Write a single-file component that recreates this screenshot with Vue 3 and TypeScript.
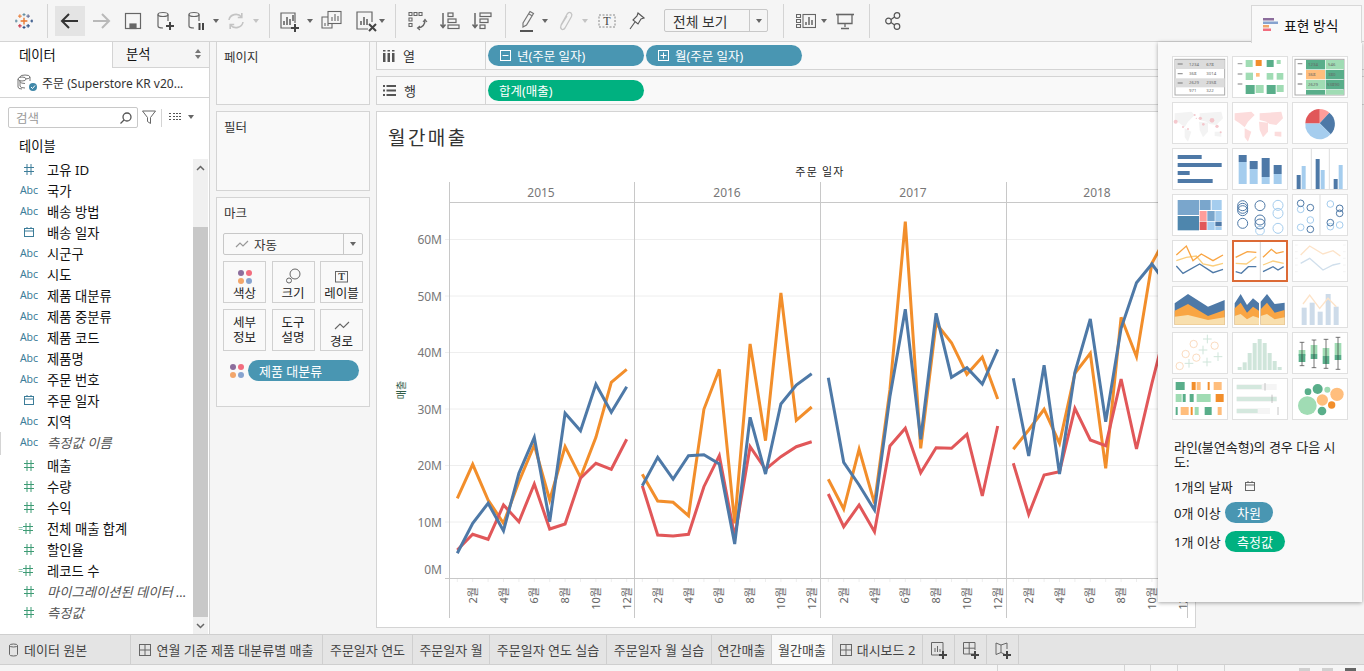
<script setup lang="ts">
type Kind = 'dim' | 'abc' | 'cal' | 'mea' | 'calc'
interface Field { name: string; kind: Kind; italic?: boolean; sep?: boolean }

const fields: Field[] = [
  { name: '고유 ID', kind: 'dim' },
  { name: '국가', kind: 'abc' },
  { name: '배송 방법', kind: 'abc' },
  { name: '배송 일자', kind: 'cal' },
  { name: '시군구', kind: 'abc' },
  { name: '시도', kind: 'abc' },
  { name: '제품 대분류', kind: 'abc' },
  { name: '제품 중분류', kind: 'abc' },
  { name: '제품 코드', kind: 'abc' },
  { name: '제품명', kind: 'abc' },
  { name: '주문 번호', kind: 'abc' },
  { name: '주문 일자', kind: 'cal' },
  { name: '지역', kind: 'abc' },
  { name: '측정값 이름', kind: 'abc', italic: true, sep: true },
  { name: '매출', kind: 'mea' },
  { name: '수량', kind: 'mea' },
  { name: '수익', kind: 'mea' },
  { name: '전체 매출 합계', kind: 'calc' },
  { name: '할인율', kind: 'mea' },
  { name: '레코드 수', kind: 'calc' },
  { name: '마이그레이션된 데이터 ...', kind: 'mea', italic: true },
  { name: '측정값', kind: 'mea', italic: true },
]

const sheetTabs = [
  { label: '데이터 원본', w: 131, icon: 'db', left: true },
  { label: '연월 기준 제품 대분류별 매출', w: 192, icon: 'grid' },
  { label: '주문일자 연도', w: 90 },
  { label: '주문일자 월', w: 77 },
  { label: '주문일자 연도 실습', w: 117 },
  { label: '주문일자 월 실습', w: 105 },
  { label: '연간매출', w: 60 },
  { label: '월간매출', w: 61, active: true },
  { label: '대시보드 2', w: 90, icon: 'grid' },
]

const grid = [239.5, 296, 352.5, 409, 465.5, 522]
const yLabels = [
  { t: '60M', y: 239.5 }, { t: '50M', y: 296 }, { t: '40M', y: 352.5 },
  { t: '30M', y: 409 }, { t: '20M', y: 465.5 }, { t: '10M', y: 522 }, { t: '0M', y: 569 },
]
const dividers = [449.5, 634.5, 820.5, 1006.5, 1187.5]
const years = [
  { t: '2015', x: 541 }, { t: '2016', x: 727 }, { t: '2017', x: 913 }, { t: '2018', x: 1097 },
]
const starts = [457.3, 642.3, 828.3, 1013.3]

const data: Record<string, number[][]> = {
  '#f28e2b': [
    [498.3, 464.3, 500, 523.3, 481.7, 445, 500, 446.7, 477.3, 437.3, 382.3, 369.3],
    [474.3, 501, 502.3, 515.7, 409.3, 369.3, 523.3, 344, 440.7, 293, 420.3, 407],
    [479.3, 509, 449.3, 503.3, 390, 221.7, 448.3, 323.3, 342.7, 374.3, 357, 399],
    [449.3, 430, 409.3, 443.3, 373.3, 353.3, 468.3, 317.3, 356.7, 263.3, 235, 220],
  ],
  '#e15759': [
    [550, 534.3, 539.3, 505, 521.7, 484, 529, 524, 478.3, 463.3, 469.3, 439.3],
    [485.7, 535, 536, 534.3, 486.7, 455.7, 536.7, 446.7, 469.3, 456.7, 446.7, 441.7],
    [494, 526.7, 505, 531.7, 446, 428.3, 472.7, 447.7, 448.3, 434.3, 496, 426],
    [463.3, 514.3, 475, 471.7, 408.3, 440, 445.7, 379, 449, 383.3, 323, 330],
  ],
  '#4e79a7': [
    [553.3, 523.3, 503.3, 530.7, 473.3, 437.3, 521.7, 413.3, 430.7, 384.3, 412.3, 386.7],
    [485.7, 457.3, 479, 455.7, 454.7, 464, 544, 417.3, 474, 404, 385, 373.7],
    [377.7, 462.3, 485, 510, 396.7, 309.3, 439.3, 313.3, 377.3, 367.7, 384, 349.3],
    [378.3, 456, 365.3, 474, 372.3, 319, 421.7, 328.3, 282.7, 264, 285, 270],
  ],
}
const series = Object.keys(data).flatMap((color) =>
  data[color].map((ys, p) => ({
    color,
    pts: ys.map((y, i) => `${(starts[p] + i * 15.4).toFixed(1)},${y}`).join(' '),
  })),
)
const months = starts.flatMap((s) =>
  [2, 4, 6, 8, 10, 12].map((m) => ({ t: `${m}월`, x: s + (m - 1) * 15.4 })),
)
const ticks = starts.flatMap((s) => Array.from({ length: 12 }, (_, i) => s + i * 15.4))
const continents =
  'M45 340L95 335L105 345L85 365L75 382L60 370L45 360ZM75 385L95 395L85 425L75 412ZM120 340L185 335L190 355L170 375L150 372L140 365L120 360ZM118 365L145 368L145 395L130 412L120 390ZM165 395L185 395L185 410L165 408Z'
</script>

<template>
  <div class="app">
    <header class="toolbar">
      <div class="tb w47">
        <svg width="18" height="18" viewBox="0 0 24 24" stroke-width="1.3">
          <g stroke="#e8762d"><path d="M12 7.5v9M7.5 12h9" stroke-width="1.8" /></g>
          <g stroke="#e8762d"><path d="M6.5 3v5M4 5.5h5" /></g>
          <g stroke="#59879b"><path d="M12 1.5v4M10 3.500h4" /><path d="M1.500 10v4M0 12h3.500" /></g>
          <g stroke="#5b6591"><path d="M17.500 3v5M15 5.500h5" /></g>
          <g stroke="#c72035"><path d="M6.500 16v5M4 18.500h5" /></g>
          <g stroke="#1f457e"><path d="M17.500 16v5M15 18.500h5" /><path d="M22.500 10v4M20.500 12h3.500" /><path d="M12 18.500v4M10 20.500h4" /></g>
        </svg>
      </div>
      <i class="sep"></i>
      <i class="sp7"></i>
      <button class="tb w30 on">
        <svg width="24" height="24" viewBox="0 0 24 24" fill="none" stroke="#333" stroke-width="2"><path d="M20 12H4M11 5l-7 7 7 7" /></svg>
      </button>
      <div class="tb w32">
        <svg width="24" height="24" viewBox="0 0 24 24" fill="none" stroke="#b9b9b9" stroke-width="2"><path d="M4 12h16M13 5l7 7-7 7" /></svg>
      </div>
      <div class="tb w32">
        <svg width="20" height="20" viewBox="0 0 20 20" fill="none" stroke="#666" stroke-width="1.200"><rect x="2.500" y="2.500" width="15" height="15" /><rect x="7" y="13" width="6" height="4.500" fill="#666" /></svg>
      </div>
      <div class="tb w32">
        <svg width="24" height="24" viewBox="0 0 24 24" fill="none" stroke="#666" stroke-width="1.200"><ellipse cx="10" cy="5.500" rx="5" ry="2" /><path d="M5 5.500V17q0 2 5 2M15 5.500V12" /><path d="M17 13v8M13 17h8" stroke="#444" stroke-width="2" /></svg>
      </div>
      <div class="tb w30">
        <svg width="24" height="24" viewBox="0 0 24 24" fill="none" stroke="#666" stroke-width="1.200"><ellipse cx="10" cy="5.500" rx="5" ry="2" /><path d="M5 5.500V17q0 2 5 2M15 5.500V12" /><path d="M15.500 14v7M19 14v7" stroke="#444" stroke-width="2" /></svg>
      </div>
      <div class="tb w10"><i class="dd"></i></div>
      <div class="tb w29">
        <svg width="20" height="20" viewBox="0 0 20 20" fill="none" stroke="#c4c4c4" stroke-width="1.600"><path d="M3 9a7 6.500 0 0 1 12.500-3M17 11a7 6.500 0 0 1-12.500 3" /><path d="M15.800 2v4.500h-4M4.200 18v-4.500h4" /></svg>
      </div>
      <div class="tb w12"><i class="dd off"></i></div>
      <i class="sp7"></i>
      <i class="sep"></i>
      <i class="sp4"></i>
      <div class="tb w30">
        <svg width="24" height="24" viewBox="0 0 24 24" fill="none" stroke="#666" stroke-width="1.200"><path d="M16 19H4V4h14v10" /><path d="M7 16v-4M10 16V8M13 16v-6M16 12V6" stroke-width="1.600" /><path d="M18 15v8M14 19h8" stroke="#444" stroke-width="2" /></svg>
      </div>
      <div class="tb w12"><i class="dd"></i></div>
      <div class="tb w30">
        <svg width="24" height="24" viewBox="0 0 24 24" fill="none" stroke="#666" stroke-width="1.100"><rect x="9" y="2.500" width="13" height="12" fill="#f5f5f5" /><path d="M13 12V8M16 12V5M19 12V7" /><path d="M9 8H3v11h10v-4.500" /><path d="M6 17v-3M9 17v-2" /></svg>
      </div>
      <i class="sp7"></i>
      <div class="tb w26">
        <svg width="24" height="24" viewBox="0 0 24 24" fill="none" stroke="#666" stroke-width="1.200"><path d="M14 20H3V3h15v10" /><path d="M7 16v-4M10 16V8M13 16v-6" stroke-width="1.600" /><path d="M15 15l7 7M22 15l-7 7" stroke="#444" stroke-width="2" /></svg>
      </div>
      <div class="tb w6"><i class="dd"></i></div>
      <i class="sp10"></i>
      <i class="sep"></i>
      <i class="sp6"></i>
      <div class="tb w30">
        <svg width="22" height="22" viewBox="0 0 22 22" fill="none" stroke="#666" stroke-width="1.100"><path d="M3 2.500h3v3H3zM8 2.500h3v3H8zM13 2.500h3v3h-3zM3 8h3v3H3zM3 13.500h3v3H3z" /><path d="M19 10q0 7-7 8" stroke-width="1.500" /><path d="M17 12l2-2.500 2 2.500M14 16l-2.500 2 2.500 2" /></svg>
      </div>
      <i class="sp3"></i>
      <div class="tb w30">
        <svg width="22" height="22" viewBox="0 0 22 22" fill="none" stroke="#666" stroke-width="1.200"><path d="M4 3v14M1.500 14.500L4 17.500l2.500-3" stroke-width="1.500" /><rect x="9" y="3" width="5" height="3.500" /><rect x="9" y="9" width="8" height="3.500" /><rect x="9" y="15" width="11" height="3.500" /></svg>
      </div>
      <i class="sp2"></i>
      <div class="tb w30">
        <svg width="22" height="22" viewBox="0 0 22 22" fill="none" stroke="#666" stroke-width="1.200"><path d="M4 3v14M1.500 14.500L4 17.500l2.500-3" stroke-width="1.500" /><rect x="9" y="3" width="11" height="3.500" /><rect x="9" y="9" width="8" height="3.500" /><rect x="9" y="15" width="5" height="3.500" /></svg>
      </div>
      <i class="sp8"></i>
      <i class="sep"></i>
      <i class="sp7"></i>
      <div class="tb w28">
        <svg width="20" height="24" viewBox="0 0 20 24" fill="none" stroke="#777" stroke-width="1.200"><path d="M6 14L13 2.500l3.500 2L9.500 16 6 18zM12 5l3.500 2" /><rect x="3" y="21" width="13" height="2" fill="#555" stroke="none" /></svg>
      </div>
      <div class="tb w8"><i class="dd"></i></div>
      <i class="sp2"></i>
      <div class="tb w30">
        <svg width="16" height="22" viewBox="0 0 16 22" fill="none" stroke="#c4c4c4" stroke-width="1.300"><path d="M3 15L9.500 3.500q2-2 3.500-.5t.5 3.500L7 18q-2 2.500-3.500 1T3 15.500L9 6" /></svg>
      </div>
      <div class="tb w8"><i class="dd off"></i></div>
      <div class="tb w36">
        <svg width="18" height="18" viewBox="0 0 18 18" fill="none"><rect x="1" y="3" width="16" height="12" stroke="#888" stroke-dasharray="2 1.500" /><text x="9" y="13" text-anchor="middle" class="tglyph">T</text></svg>
      </div>
      <div class="tb w24">
        <svg width="16" height="18" viewBox="0 0 16 18" fill="none" stroke="#555" stroke-width="1.100"><path d="M9 1l6 5-3 1-3 5-5-4 4-4zM6 10l-5 7" /></svg>
      </div>
      <i class="sp15"></i>
      <div class="view-select"><span>전체 보기</span><b><i class="dd"></i></b></div>
      <i class="sp15"></i>
      <i class="sep"></i>
      <i class="sp12"></i>
      <div class="tb w20">
        <svg width="20" height="16" viewBox="0 0 20 16" fill="none" stroke="#666" stroke-width="1.100"><path d="M.5 1.500h4v3h-4zM.5 6.500h4v3h-4zM.5 11.500h4v3h-4z" /><rect x="7" y="1.500" width="12.500" height="13" /><path d="M10 12V9M13 12V4M16 12V7" stroke-width="1.500" /></svg>
      </div>
      <div class="tb w15"><i class="dd"></i></div>
      <div class="tb w28">
        <svg width="18" height="18" viewBox="0 0 18 18" fill="none" stroke="#666" stroke-width="1.300"><path d="M0 2.500h18" stroke-width="1.600" /><path d="M2 2.500v9h14v-9M9 11.500V15M5 16.500h8" /></svg>
      </div>
      <i class="sp10"></i>
      <i class="sep"></i>
      <i class="sp8"></i>
      <div class="tb w30">
        <svg width="16" height="18" viewBox="0 0 16 18" fill="none" stroke="#555" stroke-width="1.200"><circle cx="3.500" cy="9" r="2.800" /><circle cx="12" cy="3.500" r="2.800" /><circle cx="12" cy="14.500" r="2.800" /><path d="M6 7.500l3.600-2.400M6 10.500l3.600 2.400" /></svg>
      </div>
    </header>

    <main class="main">
      <aside class="data-pane">
        <div class="pane-tabs">
          <div class="ptab current">데이터</div>
          <div class="ptab other"><span>분석</span><em class="updown"></em></div>
        </div>
        <div class="source">
          <svg width="22" height="20" viewBox="0 0 22 20" fill="none" stroke="#777" stroke-width="1"><ellipse cx="8" cy="4" rx="5" ry="2" /><path d="M3 4v9q0 2 5 2M13 4v4M3 8.500q0 2 5 2" /><ellipse cx="5" cy="6" rx="4" ry="2" fill="#fff" /><path d="M1 6v8q0 2 4 2" /><circle cx="16" cy="14" r="4" fill="#3f87a8" stroke="none" /><path d="M14 14l1.500 1.500 2.500-3" stroke="#fff" /></svg>
          <span>주문 (Superstore KR v20...</span>
        </div>
        <div class="search-row">
          <div class="search">
            <span>검색</span>
            <svg width="14" height="14" viewBox="0 0 14 14" fill="none" stroke="#555" stroke-width="1.300"><circle cx="8" cy="6" r="4" /><path d="M5 9l-3.500 3.500" /></svg>
          </div>
          <svg class="filter" width="14" height="14" viewBox="0 0 14 14" fill="none" stroke="#666"><path d="M.5 1h13L8.500 7.500v6l-3-2V7.500z" /></svg>
          <i class="vline"></i>
          <svg class="listico" width="13" height="10" viewBox="0 0 13 10" fill="none" stroke="#555"><path d="M0 1.500h3M4 1.500h9M0 4.500h3M4 4.500h9M0 7.500h3M4 7.500h9" stroke-dasharray="2 1" /></svg>
          <i class="dd listdd"></i>
        </div>
        <div class="tables">테이블</div>
        <div class="list-wrap">
          <ul class="fields">
            <li v-for="f in fields" :key="f.name" class="field" :class="{ sep: f.sep }">
              <span class="ficon" :class="f.kind">
                <template v-if="f.kind === 'abc'">Abc</template>
                <svg v-else-if="f.kind === 'cal'" width="12" height="12" viewBox="0 0 12 12" fill="none" stroke="currentColor"><rect x="1.500" y="2.500" width="9" height="8" /><path d="M1.500 5h9M4 1v2M8 1v2" /></svg>
                <template v-else>
                  <i v-if="f.kind === 'calc'" class="eq">=</i>
                  <svg width="10" height="11" viewBox="0 0 10 11" fill="none" stroke="currentColor"><path d="M3 0v11M7 0v11M0 3.500h10M0 7.500h10" /></svg>
                </template>
              </span>
              <span class="fname" :class="{ it: f.italic }">{{ f.name }}</span>
            </li>
          </ul>
          <div class="scrollbar">
            <div class="sb-top"><svg width="9" height="6" viewBox="0 0 9 6" fill="none" stroke="#666" stroke-width="1.500"><path d="M1 5l3.500-3.500L8 5" /></svg></div>
            <div class="sb-thumb"></div>
            <div class="sb-bot"><svg width="9" height="6" viewBox="0 0 9 6" fill="none" stroke="#666" stroke-width="1.500"><path d="M1 1l3.500 3.500L8 1" /></svg></div>
          </div>
        </div>
      </aside>

      <section class="cards">
        <div class="card c-pages">페이지</div>
        <div class="card c-filter">필터</div>
        <div class="card c-marks">
          <div class="marks-title">마크</div>
          <div class="mark-select">
            <svg width="14" height="10" viewBox="0 0 14 10" fill="none" stroke="#999" stroke-width="1.200"><path d="M1 8l4-4 3 3 5-5" /></svg>
            <span>자동</span>
            <b><i class="dd"></i></b>
          </div>
          <div class="mark-grid">
            <div class="mbtn">
              <span class="dots big"><i></i><i></i><i></i><i></i></span>
              <span>색상</span>
            </div>
            <div class="mbtn">
              <svg width="16" height="16" viewBox="0 0 16 16" fill="none" stroke="#666"><circle cx="10" cy="6" r="5" /><circle cx="4" cy="12.500" r="2.500" fill="#f9f9f9" /></svg>
              <span>크기</span>
            </div>
            <div class="mbtn">
              <svg width="14" height="14" viewBox="0 0 14 14" fill="none"><rect x=".5" y="1.500" width="12" height="10.500" stroke="#666" /><text x="6.500" y="10" text-anchor="middle" class="tglyph small">T</text></svg>
              <span>레이블</span>
            </div>
            <div class="mbtn text2">세부<br />정보</div>
            <div class="mbtn text2">도구<br />설명</div>
            <div class="mbtn">
              <svg width="16" height="12" viewBox="0 0 16 12" fill="none" stroke="#666" stroke-width="1.100"><path d="M1 9l5-5 3.500 3.500L15 2" /></svg>
              <span>경로</span>
            </div>
          </div>
          <div class="mark-pill">
            <span class="dots"><i></i><i></i><i></i><i></i></span>
            <span class="pill blue wide">제품 대분류</span>
          </div>
        </div>
      </section>

      <section class="workspace">
        <div class="shelf first">
          <div class="shelf-label">
            <svg width="12" height="12" viewBox="0 0 12 12" fill="#555"><path d="M0 3h2.500v9H0zM4.500 3H7v9H4.500zM9 3h2.500v9H9zM0 0h2.500v1.500H0zM4.500 0H7v1.500H4.500zM9 0h2.500v1.500H9z" /></svg>
            <span>열</span>
          </div>
          <span class="pill blue shelfpill"><svg width="11" height="11" viewBox="0 0 11 11" fill="none" stroke="#fff"><rect x=".5" y=".5" width="10" height="10" /><path d="M2.500 5.500h6" /></svg>년(주문 일자)</span>
          <span class="pill blue shelfpill gap"><svg width="11" height="11" viewBox="0 0 11 11" fill="none" stroke="#fff"><rect x=".5" y=".5" width="10" height="10" /><path d="M2.500 5.500h6M5.500 2.500v6" /></svg>월(주문 일자)</span>
        </div>
        <div class="shelf second">
          <div class="shelf-label">
            <svg width="13" height="11" viewBox="0 0 13 11" fill="#555"><path d="M0 0h2v2H0zM3.500 0H13v2H3.500zM0 4.500h2v2H0zM3.500 4.500H13v2H3.500zM0 9h2v2H0zM3.500 9H13v2H3.500z" /></svg>
            <span>행</span>
          </div>
          <span class="pill green shelfpill text-only">합계(매출)</span>
        </div>
        <div class="view">
          <h1 class="title">월간매출</h1>
          <svg class="chart" viewBox="377 161 818 466" width="818" height="466">
            <text x="820" y="176" text-anchor="middle" class="hdr">주문 일자</text>
            <line v-for="y in grid" :key="y" x1="445" x2="1187" :y1="y" :y2="y" stroke="#eeeeee" />
            <line v-for="x in ticks" :key="x" :x1="x" :x2="x" y1="578" y2="582" stroke="#eeeeee" />
            <line v-for="x in dividers" :key="x" :x1="x" :x2="x" y1="182" y2="618" stroke="#c8c8c8" />
            <line x1="449" x2="1187" y1="202.500" y2="202.500" stroke="#c8c8c8" />
            <line x1="445" x2="1187" y1="578.500" y2="578.500" stroke="#c8c8c8" />
            <text v-for="y in years" :key="y.t" :x="y.x" y="197" text-anchor="middle" class="axis">{{ y.t }}</text>
            <text v-for="l in yLabels" :key="l.t" x="442" :y="l.y + 4.500" text-anchor="end" class="axis">{{ l.t }}</text>
            <text transform="translate(405,390) rotate(-90)" text-anchor="middle" class="ytitle">매출</text>
            <polyline v-for="(s, i) in series" :key="i" :points="s.pts" fill="none" :stroke="s.color" stroke-width="3" stroke-linejoin="miter" />
            <text v-for="m in months" :key="m.x" :transform="`translate(${m.x + 4},587) rotate(-90)`" text-anchor="end" class="mlabel">{{ m.t }}</text>
          </svg>
        </div>
      </section>
    </main>

    <nav class="sheet-tabs">
      <div v-for="t in sheetTabs" :key="t.label" class="stab" :class="{ active: t.active, left: t.left }" :style="{ width: t.w + 'px' }">
        <svg v-if="t.icon === 'db'" width="9" height="14" viewBox="0 0 9 14" fill="none" stroke="#666"><ellipse cx="4.500" cy="2.500" rx="4" ry="1.500" /><path d="M.5 2.500v9q0 1.500 4 1.500t4-1.500v-9" /></svg>
        <svg v-if="t.icon === 'grid'" width="12" height="12" viewBox="0 0 12 12" fill="none" stroke="#666"><rect x=".5" y=".5" width="11" height="11" /><path d="M6 .5v11M.5 6h11" /></svg>
        <span>{{ t.label }}</span>
      </div>
      <div class="stab newtab">
        <svg width="20" height="20" viewBox="0 0 20 20" fill="none" stroke="#666"><path d="M13 15H2.500V2.500H14V11" /><path d="M6 12V8M8.500 12V6M11 12V9" /><path d="M14 11v8M10 15h8" stroke="#444" stroke-width="2" /></svg>
      </div>
      <div class="stab newtab">
        <svg width="20" height="20" viewBox="0 0 20 20" fill="none" stroke="#666"><path d="M13 14H2.500V2.500H14V10M8.200 2.500V14M2.500 8.200H14" /><path d="M14 11v8M10 15h8" stroke="#444" stroke-width="2" /></svg>
      </div>
      <div class="stab newtab">
        <svg width="20" height="20" viewBox="0 0 20 20" fill="none" stroke="#666"><path d="M12 14.500l-4-2-5 2V3l5 2 6-2v6M8 5v7.500" /><path d="M14 11v8M10 15h8" stroke="#444" stroke-width="2" /></svg>
      </div>
    </nav>
    <footer class="status">
      <i class="st a"></i><i class="st b"></i><i class="st c"></i><i class="st d"></i><i class="st e"></i>
      <em></em><em></em><em class="dk"></em>
    </footer>

    <div class="showme-tab">
      <svg width="15" height="13" viewBox="0 0 15 13"><rect width="11" height="2.500" fill="#8c6d9c" /><rect y="3.500" width="15" height="2.500" fill="#87a3cf" /><rect y="7" width="6" height="2.500" fill="#f2a66b" /><rect y="10.500" width="8" height="2.500" fill="#f26d7e" /></svg>
      <span>표현 방식</span>
    </div>
    <aside class="showme">
      <div class="tiles">
        <div class="tile"><svg viewBox="40 171 162 120">
          <rect x="46" y="178" width="149" height="107" fill="#fff" stroke="#aaa" stroke-width="3" /><rect x="46" y="180" width="149" height="27" fill="#dcdcdc" /><rect x="46" y="235" width="149" height="27" fill="#dcdcdc" />
          <path d="M54 192h15M54 221h15M54 249h15" stroke="#999" stroke-width="4" />
          <text class="tiny" x="88" y="198">1234</text><text class="tiny" x="140" y="198">678</text><text class="tiny" x="88" y="225">368</text><text class="tiny" x="140" y="225">3014</text><text class="tiny" x="88" y="253">2629</text><text class="tiny" x="140" y="253">2358</text><text class="tiny" x="88" y="276">971</text><text class="tiny" x="140" y="276">322</text>
        </svg></div>
        <div class="tile"><svg viewBox="220 171 162 120">
          <path d="M234 191h14M234 222h14M234 252h14" stroke="#aaa" stroke-width="4" />
          <rect x="258" y="180" width="21" height="21" fill="#a0dcb4" /><rect x="288" y="180" width="18" height="18" fill="#f28e2b" /><rect x="321" y="180" width="21" height="21" fill="#59ae8a" /><rect x="351" y="180" width="12" height="12" fill="#a0dcb4" />
          <rect x="258" y="218" width="22" height="22" fill="#a0dcb4" /><rect x="289" y="219" width="11" height="11" fill="#ffbe7d" /><rect x="321" y="219" width="20" height="20" fill="#a0dcb4" /><rect x="351" y="219" width="20" height="20" fill="#a0dcb4" />
          <rect x="258" y="255" width="27" height="27" fill="#59ae8a" /><rect x="288" y="255" width="24" height="24" fill="#a0dcb4" /><rect x="321" y="255" width="27" height="27" fill="#59ae8a" /><rect x="351" y="255" width="21" height="21" fill="#a0dcb4" />
        </svg></div>
        <div class="tile"><svg viewBox="400 171 162 120">
          <rect x="406" y="178" width="147" height="107" fill="#fff" stroke="#aaa" stroke-width="3" /><path d="M414 191h14M414 222h14M414 252h14" stroke="#999" stroke-width="4" />
          <rect x="439" y="180" width="57" height="28" fill="#59ae8a" /><rect x="498" y="180" width="55" height="28" fill="#a0dcb4" /><rect x="439" y="210" width="57" height="28" fill="#ffbe7d" /><rect x="498" y="210" width="55" height="28" fill="#59ae8a" /><rect x="439" y="240" width="57" height="28" fill="#a0dcb4" /><rect x="498" y="240" width="55" height="28" fill="#59ae8a" /><rect x="439" y="270" width="57" height="14" fill="#59ae8a" /><rect x="498" y="270" width="55" height="14" fill="#a0dcb4" />
          <text class="tiny" x="445" y="198">1234</text><text class="tiny" x="505" y="198">546</text><text class="tiny" x="445" y="228">368</text><text class="tiny" x="505" y="228">380</text><text class="tiny" x="445" y="258">2629</text><text class="tiny" x="502" y="258">53890</text>
        </svg></div>

        <div class="tile"><svg viewBox="40 309 162 120">
          <path :d="continents" fill="#f3f3f3" />
          <g fill="#f3bcc2" opacity=".8"><circle cx="48" cy="365" r="6" /><circle cx="122" cy="355" r="5" /><circle cx="157" cy="361" r="7" /><circle cx="105" cy="345" r="3" /><circle cx="172" cy="379" r="5" /><circle cx="131" cy="373" r="4" /><circle cx="70" cy="381" r="3" /><circle cx="85" cy="387" r="3" /><circle cx="183" cy="397" r="3" /><circle cx="110" cy="355" r="2" /></g>
        </svg></div>
        <div class="tile"><svg viewBox="220 309 162 120"><path :d="continents" transform="translate(180,0)" fill="#fcdcdc" /></svg></div>
        <div class="tile"><svg viewBox="400 309 162 120">
          <path d="M480 370L480 327A43.500 43.500 0 0 1 509 338Z" fill="#ff9d9a" /><path d="M480 370L509 338A43.500 43.500 0 0 1 513 403Z" fill="#4e79a7" /><path d="M480 370L513 403A43.500 43.500 0 0 1 437 370Z" fill="#a5cdee" /><path d="M480 370L437 370A43.500 43.500 0 0 1 480 327Z" fill="#e15759" />
        </svg></div>

        <div class="tile"><svg viewBox="40 447 162 120"><g fill="#4e79a7"><rect x="54" y="465" width="72" height="12" /><rect x="54" y="489" width="132" height="12" /><rect x="54" y="513" width="36" height="12" /><rect x="54" y="537" width="105" height="12" /></g></svg></div>
        <div class="tile"><svg viewBox="220 447 162 120">
          <g fill="#4e79a7"><rect x="237" y="465" width="24" height="21" /><rect x="270" y="483" width="24" height="24" /><rect x="306" y="474" width="24" height="57" /><rect x="342" y="495" width="24" height="27" /></g>
          <g fill="#a5cdee"><rect x="237" y="486" width="24" height="66" /><rect x="270" y="507" width="24" height="45" /><rect x="306" y="531" width="24" height="21" /><rect x="342" y="522" width="24" height="30" /></g>
        </svg></div>
        <div class="tile"><svg viewBox="400 447 162 120">
          <path d="M455 447v120M509 447v120" stroke="#ccc" stroke-width="2" />
          <g fill="#4e79a7"><rect x="411" y="525" width="12" height="42" /><rect x="468" y="477" width="12" height="90" /><rect x="522" y="537" width="12" height="30" /></g>
          <g fill="#a5cdee"><rect x="426" y="498" width="12" height="69" /><rect x="483" y="510" width="12" height="57" /><rect x="537" y="495" width="12" height="72" /></g>
        </svg></div>

        <div class="tile"><svg viewBox="40 585 162 120">
          <rect x="54" y="600" width="64" height="45" fill="#7aa6cc" /><rect x="54" y="648" width="64" height="43" fill="#4e86ad" /><rect x="120" y="600" width="33" height="30" fill="#7aa6cc" /><rect x="156" y="600" width="30" height="30" fill="#a5cdee" /><rect x="120" y="633" width="21" height="30" fill="#ff9d9a" /><rect x="143" y="633" width="22" height="30" fill="#7aa6cc" /><rect x="167" y="633" width="19" height="30" fill="#a5cdee" /><rect x="120" y="665" width="21" height="25" fill="#e15759" /><rect x="143" y="665" width="22" height="25" fill="#a5cdee" /><rect x="167" y="665" width="19" height="14" fill="#4e79a7" /><rect x="167" y="681" width="19" height="9" fill="#a5cdee" />
        </svg></div>
        <div class="tile"><svg viewBox="220 585 162 120">
          <g fill="none" stroke="#a5cdee" stroke-width="3"><circle cx="355" cy="616" r="15" /><circle cx="355" cy="640" r="15" /><circle cx="301" cy="692" r="13" /><circle cx="355" cy="685" r="15" /></g>
          <g fill="none" stroke="#4e79a7" stroke-width="3"><circle cx="249" cy="617" r="15" /><circle cx="249" cy="625" r="15" /><circle cx="249" cy="632" r="15" /><circle cx="301" cy="617" r="15" /><circle cx="249" cy="670" r="15" /><circle cx="301" cy="660" r="15" /><circle cx="301" cy="672" r="15" /></g>
        </svg></div>
        <div class="tile"><svg viewBox="400 585 162 120">
          <path d="M481 585v120" stroke="#ccc" stroke-width="2" />
          <g fill="none" stroke="#a5cdee" stroke-width="3"><circle cx="423" cy="628" r="10" /><circle cx="423" cy="682" r="10" /><circle cx="452" cy="660" r="10" /><circle cx="512" cy="612" r="10" /><circle cx="512" cy="680" r="10" /><circle cx="540" cy="675" r="10" /></g>
          <g fill="none" stroke="#4e79a7" stroke-width="3"><circle cx="423" cy="610" r="10" /><circle cx="452" cy="623" r="10" /><circle cx="452" cy="688" r="10" /><circle cx="540" cy="625" r="10" /><circle cx="540" cy="640" r="10" /><circle cx="512" cy="668" r="10" /></g>
        </svg></div>

        <div class="tile"><svg viewBox="40 723 162 120" fill="none" stroke-width="4">
          <polyline points="50,782 80,772 110,768 130,792 160,798 190,790" stroke="#fbcf7e" /><polyline points="50,765 80,738 100,782 125,762 160,782 190,765" stroke="#f9a543" /><polyline points="50,798 70,820 120,792 160,818 190,808" stroke="#4e79a7" />
        </svg></div>
        <div class="tile active"><svg viewBox="220 723 162 120" fill="none" stroke-width="4">
          <path d="M302 723v120" stroke="#bbb" stroke-width="2" />
          <polyline points="228,790 260,792 290,770" stroke="#fbcf7e" /><polyline points="228,772 263,755 290,757" stroke="#f9a543" /><polyline points="228,815 245,820 266,800 290,800" stroke="#4e79a7" />
          <polyline points="310,795 340,783 372,790" stroke="#fbcf7e" /><polyline points="310,772 335,748 350,760 372,755" stroke="#f9a543" /><polyline points="310,815 340,800 355,810 372,800" stroke="#4e79a7" />
          <rect x="221.500" y="724.500" width="159" height="117" stroke="#dc6a36" stroke-width="3" />
        </svg></div>
        <div class="tile"><svg viewBox="400 723 162 120" fill="none" stroke-width="4">
          <path d="M406 735h8M406 755h8M406 775h8M406 795h8M406 815h8M550 735h8M550 755h8M550 775h8M550 795h8M550 815h8" stroke="#eee" stroke-width="2" />
          <polyline points="423,765 450,738 490,762 520,752 542,768" stroke="#fde3c8" /><polyline points="423,790 450,775 490,810 520,795 542,790" stroke="#d0dfec" />
        </svg></div>

        <div class="tile"><svg viewBox="40 -9 162 120">
          <polygon points="45,40 85,12 145,50 195,30 195,104 45,104" fill="#4e79a7" /><polygon points="45,62 85,42 145,78 195,60 195,104 45,104" fill="#f9a543" /><polygon points="45,80 85,75 145,90 195,82 195,104 45,104" fill="#f8dfae" />
        </svg></div>
        <div class="tile"><svg viewBox="220 -9 162 120">
          <polygon points="225,40 243,12 262,45 280,25 298,40 298,104 225,104" fill="#4e79a7" /><polygon points="225,55 243,38 262,68 280,50 298,62 298,104 225,104" fill="#f9a543" /><polygon points="225,78 243,72 262,88 280,78 298,84 298,104 225,104" fill="#f8dfae" />
          <polygon points="303,35 322,12 345,42 375,38 375,104 303,104" fill="#4e79a7" /><polygon points="303,58 322,38 345,68 375,60 375,104 303,104" fill="#f9a543" /><polygon points="303,78 322,72 345,88 375,82 375,104 303,104" fill="#f8dfae" />
        </svg></div>
        <div class="tile"><svg viewBox="400 -9 162 120">
          <g fill="#cddbe9"><rect x="426" y="53" width="15" height="52" /><rect x="450" y="38" width="15" height="67" /><rect x="474" y="65" width="15" height="40" /><rect x="498" y="12" width="15" height="93" /><rect x="522" y="50" width="15" height="55" /></g>
          <polyline points="430,42 450,15 480,55 505,25 530,50" fill="none" stroke="#fde3c8" stroke-width="4" />
        </svg></div>

        <div class="tile"><svg viewBox="40 129 162 120">
          <g fill="none" stroke="#fbdcc0" stroke-width="3"><circle cx="102" cy="162" r="11" /><circle cx="165" cy="167" r="11" /><circle cx="78" cy="192" r="11" /><circle cx="110" cy="203" r="11" /><circle cx="60" cy="228" r="11" /></g>
          <path d="M130 147h26M143 134v26M117 180h26M130 167v26M162 200h26M175 187v26M129 216h26M142 203v26M75 220h26M88 207v26" stroke="#cfe5da" stroke-width="3" />
        </svg></div>
        <div class="tile"><svg viewBox="220 129 162 120"><g fill="#cfe5da"><rect x="234" y="231" width="12" height="9" /><rect x="249" y="217" width="12" height="23" /><rect x="264" y="189" width="12" height="51" /><rect x="279" y="159" width="12" height="81" /><rect x="294" y="147" width="12" height="93" /><rect x="309" y="159" width="12" height="81" /><rect x="324" y="189" width="12" height="51" /><rect x="339" y="213" width="12" height="27" /><rect x="354" y="231" width="12" height="9" /></g></svg></div>
        <div class="tile"><svg viewBox="400 129 162 120">
          <g fill="#a0dcb4"><rect x="417" y="180" width="20" height="18" /><rect x="453" y="165" width="20" height="27" /><rect x="489" y="174" width="20" height="24" /><rect x="525" y="159" width="20" height="36" /></g>
          <g fill="#59ae8a"><rect x="417" y="192" width="20" height="24" /><rect x="453" y="192" width="20" height="15" /><rect x="489" y="198" width="20" height="24" /><rect x="525" y="195" width="20" height="15" /></g>
          <path d="M427 157v70M420 157h14M420 227h14M463 150v83M456 150h14M456 233h14M499 148v87M492 148h14M492 235h14M535 142v96M528 142h14M528 238h14" stroke="#333" stroke-width="2" fill="none" />
        </svg></div>

        <div class="tile"><svg viewBox="40 267 162 120">
          <g fill="#59ae8a"><rect x="48" y="276" width="27" height="24" /><rect x="90" y="312" width="12" height="24" /><rect x="69" y="312" width="9" height="24" /><rect x="48" y="351" width="6" height="24" /><rect x="135" y="351" width="21" height="24" /></g>
          <g fill="#f28e2b"><rect x="96" y="276" width="12" height="24" /><rect x="144" y="276" width="6" height="24" /><rect x="168" y="312" width="24" height="24" /><rect x="93" y="351" width="6" height="24" /></g>
          <g fill="#ffbe7d"><rect x="111" y="276" width="12" height="24" /><rect x="162" y="276" width="24" height="24" /><rect x="63" y="351" width="24" height="24" /><rect x="174" y="351" width="12" height="24" /></g>
          <g fill="#a0dcb4"><rect x="48" y="312" width="18" height="24" /><rect x="111" y="312" width="42" height="24" /><rect x="105" y="351" width="12" height="24" /></g>
        </svg></div>
        <div class="tile"><svg viewBox="220 267 162 120">
          <g fill="#f5f5f5"><rect x="231" y="282" width="120" height="18" /><rect x="231" y="318" width="120" height="18" /><rect x="231" y="354" width="100" height="18" /></g>
          <g fill="#d4e8de"><rect x="231" y="285" width="75" height="12" /><rect x="231" y="321" width="120" height="12" /><rect x="231" y="357" width="63" height="12" /></g>
          <path d="M316 279v23M337 314v25M355 351v24" stroke="#aaa" stroke-width="2" />
        </svg></div>
        <div class="tile"><svg viewBox="400 267 162 120">
          <circle cx="443" cy="347" r="28" fill="#a0dcb4" /><circle cx="445" cy="305" r="10" fill="#59ae8a" /><circle cx="474" cy="297" r="15" fill="#59ae8a" /><circle cx="503" cy="299" r="9" fill="#a0dcb4" /><circle cx="532" cy="313" r="20" fill="#ffbe7d" /><circle cx="488" cy="330" r="17" fill="#ffbe7d" /><circle cx="516" cy="345" r="11" fill="#f28e2b" /><circle cx="487" cy="363" r="13" fill="#59ae8a" />
        </svg></div>
      </div>
      <p class="hint">라인(불연속형)의 경우 다음 시도:</p>
      <div class="need first">
        <span>1개의 날짜</span>
        <svg class="need-cal" width="12" height="12" viewBox="0 0 12 12" fill="none" stroke="#666"><rect x="1.500" y="2.500" width="9" height="8" /><path d="M1.500 5h9M4 1v2M8 1v2" /></svg>
      </div>
      <div class="need second"><span class="lbl">0개 이상</span><span class="pill blue need-pill p1">차원</span></div>
      <div class="need"><span class="lbl">1개 이상</span><span class="pill green need-pill p2">측정값</span></div>
    </aside>
  </div>
</template>

<style scoped>
.app {
  position: relative;
  width: 1364px;
  height: 671px;
  overflow: hidden;
  display: flex;
  flex-direction: column;
  background: #f5f5f5;
  color: #222;
  font-family: "Noto Sans", "Noto Sans CJK KR", sans-serif;
  font-size: 13px;
}
i, em { font-style: normal; }
svg { display: block; flex: none; }

/* toolbar */
.toolbar {
  height: 42px;
  flex: none;
  display: flex;
  align-items: center;
  box-sizing: border-box;
  border-bottom: 1px solid #d4d4d4;
}
.tb {
  height: 30px;
  flex: none;
  display: flex;
  align-items: center;
  justify-content: center;
  padding: 0;
  border: 0;
  background: none;
}
.tb.on { background: #e4e4e4; }
.w6 { width: 6px; } .w8 { width: 8px; } .w10 { width: 10px; } .w12 { width: 12px; } .w15 { width: 15px; }
.w20 { width: 20px; } .w24 { width: 24px; } .w26 { width: 26px; } .w28 { width: 28px; } .w29 { width: 29px; }
.w30 { width: 30px; } .w32 { width: 32px; } .w36 { width: 36px; } .w47 { width: 47px; }
.sep { flex: none; width: 1px; height: 34px; background: #d4d4d4; }
.sp2 { flex: none; width: 2px; } .sp3 { flex: none; width: 3px; } .sp4 { flex: none; width: 4px; }
.sp6 { flex: none; width: 6px; } .sp7 { flex: none; width: 7px; } .sp8 { flex: none; width: 8px; }
.sp10 { flex: none; width: 10px; } .sp12 { flex: none; width: 12px; } .sp15 { flex: none; width: 15px; }
.dd {
  display: block;
  flex: none;
  width: 0;
  height: 0;
  border-left: 3.5px solid transparent;
  border-right: 3.5px solid transparent;
  border-top: 4px solid #666;
}
.dd.off { border-top-color: #c4c4c4; }
.tglyph { font: 12px "Liberation Serif", serif; fill: #444; }
.tglyph.small { font-size: 10px; font-weight: 700; }
.view-select {
  flex: none;
  width: 104px;
  height: 23px;
  box-sizing: border-box;
  display: flex;
  align-items: center;
  border: 1px solid #c8c8c8;
  border-radius: 2px;
  font-size: 13.800px;
  color: #333;
}
.view-select span { flex: 1; padding-left: 8px; }
.view-select b {
  width: 17px;
  height: 100%;
  display: flex;
  align-items: center;
  justify-content: center;
  border-left: 1px solid #c8c8c8;
}

/* main */
.main { flex: none; height: 592px; display: flex; }

.data-pane {
  flex: none;
  width: 210px;
  box-sizing: border-box;
  background: #fff;
  border-right: 1px solid #d4d4d4;
  display: flex;
  flex-direction: column;
}
.pane-tabs { display: flex; height: 26px; flex: none; }
.ptab { box-sizing: border-box; height: 26px; display: flex; align-items: center; padding-bottom: 2px; font-size: 13.300px; color: #111; }
.ptab.current { width: 112px; padding-left: 19px; }
.ptab.other {
  width: 97px;
  padding-left: 13px;
  background: #f5f5f5;
  border-left: 1px solid #d4d4d4;
  border-bottom: 1px solid #d4d4d4;
  justify-content: space-between;
  padding-right: 8px;
}
.updown { position: relative; width: 6px; height: 10px; }
.updown::before, .updown::after {
  content: "";
  position: absolute;
  left: 0;
  border-left: 3px solid transparent;
  border-right: 3px solid transparent;
}
.updown::before { top: 0; border-bottom: 4px solid #777; }
.updown::after { bottom: 0; border-top: 4px solid #777; }
.source {
  height: 30px;
  flex: none;
  box-sizing: border-box;
  display: flex;
  align-items: center;
  gap: 3px;
  padding-left: 17px;
  border-bottom: 1px solid #d4d4d4;
  font-size: 12px;
  color: #333;
}
.search-row {
  height: 38px;
  flex: none;
  box-sizing: border-box;
  padding: 9px 0 0 8px;
  display: flex;
  align-items: flex-start;
}
.search {
  width: 130px;
  height: 21px;
  box-sizing: border-box;
  border: 1px solid #c8c8c8;
  border-radius: 2px;
  display: flex;
  align-items: center;
  justify-content: space-between;
  padding: 0 4px 0 7px;
  color: #999;
  font-size: 12.500px;
}
.filter { margin: 3px 0 0 4px; }
.vline { width: 1px; height: 18px; margin: 2px 7px 0 5px; background: #d4d4d4; }
.listico { margin-top: 5px; }
.listdd { margin: 8px 0 0 6px; }
.tables { height: 23px; flex: none; box-sizing: border-box; padding-left: 19px; font-size: 13.300px; line-height: 21px; color: #111; }
.list-wrap { flex: 1; min-height: 0; display: flex; }
.fields { flex: 1; list-style: none; margin: 0; padding: 0; }
.field { height: 21px; box-sizing: border-box; padding-bottom: 1px; display: flex; align-items: center; }
.field.sep { height: 23px; padding-bottom: 3px; position: relative; }
.field.sep::after { content: ""; position: absolute; left: 15px; right: 7px; bottom: 0; height: 1px; background: #d9d9d9; }
.ficon { width: 47px; flex: none; display: flex; align-items: center; justify-content: center; padding-left: 11px; box-sizing: border-box; }
.ficon.abc { font: 10.500px "Noto Sans", sans-serif; color: #3d7d99; }
.ficon.dim, .ficon.cal { color: #3d7d99; }
.ficon.mea, .ficon.calc { color: #3d9b74; }
.eq { font-size: 9px; line-height: 9px; margin-left: -7px; color: #3d9b74; }
.fname { font-size: 13.300px; color: #111; white-space: nowrap; }
.fname.it { font-style: italic; color: #555; }
.scrollbar { flex: none; width: 15px; margin-right: 1px; display: flex; flex-direction: column; background: #f0f0f0; }
.sb-top { height: 68px; flex: none; display: flex; justify-content: center; padding-top: 6px; box-sizing: border-box; }
.sb-thumb { height: 390px; flex: none; background: #c8c8c8; }
.sb-bot { flex: 1; display: flex; justify-content: center; align-items: center; }

/* cards */
.cards { flex: none; width: 154px; margin-left: 6px; display: flex; flex-direction: column; gap: 6px; }
.card {
  box-sizing: border-box;
  background: #f9f9f9;
  border: 1px solid #d4d4d4;
  padding: 5px 7px;
  font-size: 12.500px;
  color: #333;
}
.c-pages { height: 63px; border-top: 0; }
.c-filter { height: 80px; }
.c-marks { height: 210px; padding: 0 6px; }
.marks-title { height: 35px; line-height: 32px; padding-left: 1px; }
.mark-select {
  height: 22px;
  box-sizing: border-box;
  display: flex;
  align-items: center;
  border: 1px solid #c8c8c8;
  border-radius: 2px;
  padding-left: 11px;
  font-size: 12.500px;
}
.mark-select span { flex: 1; padding-left: 5px; }
.mark-select b { width: 18px; height: 100%; display: flex; align-items: center; justify-content: center; border-left: 1px solid #c8c8c8; }
.mark-grid {
  margin-top: 6px;
  display: grid;
  grid-template-columns: 43px 43px 43px;
  grid-auto-rows: 42px;
  justify-content: space-between;
  row-gap: 6px;
}
.mbtn {
  box-sizing: border-box;
  border: 1px solid #d0d0d0;
  display: flex;
  flex-direction: column;
  align-items: center;
  justify-content: flex-end;
  padding-bottom: 1px;
  gap: 2px;
  font-size: 12.500px;
  line-height: 15px;
  text-align: center;
  color: #222;
}
.mbtn.text2 { justify-content: center; padding-bottom: 1px; }
.dots { display: grid; grid-template-columns: 6px 6px; gap: 2px; flex: none; }
.dots i { width: 6px; height: 6px; border-radius: 50%; }
.dots i:nth-child(1) { background: #8c6d9c; }
.dots i:nth-child(2) { background: #f26d7e; }
.dots i:nth-child(3) { background: #f2a66b; }
.dots i:nth-child(4) { background: #87a3cf; }
.mark-pill { display: flex; align-items: center; margin-top: 9px; padding-left: 7px; gap: 4px; }
.pill {
  display: flex;
  align-items: center;
  height: 21px;
  border-radius: 11px;
  color: #fff;
  font-size: 12.500px;
  box-sizing: border-box;
  flex: none;
}
.pill.blue { background: #4996b2; }
.pill.green { background: #00b180; }
.pill.wide { width: 111px; padding-left: 11px; font-size: 13px; }

/* shelves */
.workspace { flex: none; width: 988px; margin-left: 6px; display: flex; flex-direction: column; }
.shelf {
  flex: none;
  box-sizing: border-box;
  background: #f9f9f9;
  display: flex;
  align-items: center;
  border: 1px solid #d4d4d4;
  border-right: 0;
}
.shelf.first { height: 28px; border-top: 0; }
.shelf.second { height: 29px; margin-top: 6px; }
.shelf-label {
  width: 109px;
  height: 100%;
  flex: none;
  box-sizing: border-box;
  border-right: 1px solid #d4d4d4;
  display: flex;
  align-items: center;
  gap: 8px;
  padding-left: 6px;
  font-size: 13px;
  margin-right: 2px;
  color: #333;
}
.shelfpill { width: 156px; padding-left: 12px; gap: 6px; }
.shelfpill.gap { margin-left: 2px; }
.shelfpill.text-only { padding-left: 11px; }

/* view */
.view {
  width: 820px;
  height: 517px;
  margin-top: 6px;
  box-sizing: border-box;
  border: 1px solid #d4d4d4;
  background: #fff;
  flex: none;
}
.title {
  margin: 0;
  height: 49px;
  box-sizing: border-box;
  padding: 11px 0 0 11px;
  font-size: 19px;
  line-height: 30px;
  letter-spacing: 2.400px;
  font-weight: 400;
  color: #333;
}
.chart { display: block; }
.hdr { font-size: 11px; fill: #222; letter-spacing: 1.200px; }
.axis { font-size: 12px; fill: #777; }
.ytitle { font-size: 10px; fill: #2f5d46; }
.mlabel { font-size: 11px; fill: #666; }

/* tabs */
.sheet-tabs {
  flex: none;
  height: 31px;
  box-sizing: border-box;
  display: flex;
  background: #e4e4e4;
  border-top: 1px solid #cfcfcf;
  border-bottom: 1px solid #cfcfcf;
}
.stab {
  flex: none;
  box-sizing: border-box;
  display: flex;
  align-items: center;
  justify-content: center;
  gap: 5px;
  border-right: 1px solid #cfcfcf;
  font-size: 13px;
  color: #444;
  white-space: nowrap;
}
.stab.left { justify-content: flex-start; padding-left: 9px; gap: 6px; }
.stab.active { background: #f9f9f9; }
.stab.newtab { width: 32px; }
.status { flex: 1; position: relative; display: flex; justify-content: flex-end; gap: 12px; padding: 3px 8px 0 0; box-sizing: border-box; }
.status em { width: 11px; height: 4px; background: #d0d0d0; }
.status em.dk { background: #666; }
.st { position: absolute; top: 0; bottom: 0; width: 1px; background: #d4d4d4; }
.st.a { left: 997px; } .st.b { left: 1124px; } .st.c { left: 1150px; } .st.d { left: 1177px; } .st.e { left: 1224px; }

/* show me */
.showme-tab {
  position: absolute;
  left: 1251px;
  top: 5px;
  width: 111px;
  height: 38px;
  box-sizing: border-box;
  background: #f9f9f9;
  border: 1px solid #d8d8d8;
  border-bottom: 0;
  display: flex;
  align-items: center;
  gap: 6px;
  padding-left: 11px;
  font-size: 13.800px;
  color: #111;
  z-index: 2;
}
.showme {
  position: absolute;
  left: 1158px;
  top: 42px;
  width: 204px;
  height: 560px;
  box-sizing: border-box;
  background: #f9f9f9;
  box-shadow: 0 1px 4px rgba(0, 0, 0, 0.35);
  padding: 14px 0 0 14px;
  z-index: 1;
}
.tiles { display: grid; grid-template-columns: repeat(3, 56px); grid-auto-rows: 42px; gap: 4px; }
.tile { box-sizing: border-box; border: 1px solid #e0e0e0; background: #fff; }
.tile.active { border-color: #dc6a36; }
.tile svg { width: 54px; height: 40px; }
.tiny { font-size: 13px; fill: #666; font-family: "Noto Sans", sans-serif; }
.hint { margin: 20px 0 0 2px; width: 170px; font-size: 13px; line-height: 15px; color: #222; word-break: break-all; }
.need { display: flex; align-items: center; margin: 8px 0 0 2px; height: 21px; font-size: 13px; color: #222; gap: 5px; }
.need.first { margin-top: 7px; gap: 11px; height: 18px; }
.need.second { margin-top: 7px; }
.lbl { width: 46px; flex: none; white-space: nowrap; }
.need-pill { justify-content: center; font-size: 13px; }
.need-pill.p1 { width: 48px; }
.need-pill.p2 { width: 60px; }
</style>

<style>
html, body { margin: 0; overflow: hidden; background: #f5f5f5; }
</style>
